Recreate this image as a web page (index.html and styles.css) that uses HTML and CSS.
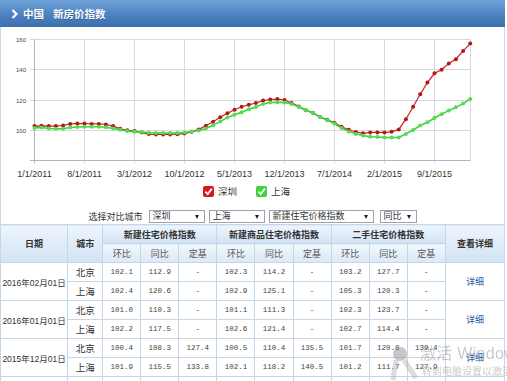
FILE: index.html
```html
<!DOCTYPE html>
<html lang="zh-CN">
<head>
    <meta charset="UTF-8">
    <meta name="viewport" content="width=device-width, initial-scale=1.0">
    <title>中国 新房价指数</title>
    <link rel="stylesheet" href="styles.css">
</head>
<body>
    <div class="panel">
        <div class="panel-title">
            <svg class="chevron" width="7" height="10" viewBox="0 0 7 10">
                <polyline points="1.5,1 5.5,5 1.5,9" fill="none" stroke="#fff" stroke-width="2.2"/>
            </svg>
            <span>中国</span>
            <span class="title-main">新房价指数</span>
        </div>

        <div class="chart-box">
            <svg id="chart" class="chart" width="503" height="158"></svg>

            <div class="legend">
                <span class="legend-item">
                    <svg class="check" width="11" height="11" viewBox="0 0 11 11">
                        <rect width="11" height="11" rx="2" fill="#d9161e"/>
                        <path d="M2.4 5.6 L4.7 8.1 L8.9 2.6" fill="none" stroke="#fff" stroke-width="1.8"/>
                    </svg>
                    深圳
                </span>
                <span class="legend-item">
                    <svg class="check" width="11" height="11" viewBox="0 0 11 11">
                        <rect width="11" height="11" rx="2" fill="#3fd33f"/>
                        <path d="M2.4 5.6 L4.7 8.1 L8.9 2.6" fill="none" stroke="#fff" stroke-width="1.8"/>
                    </svg>
                    上海
                </span>
            </div>

            <div class="filters">
                <span class="filter-label">选择对比城市</span>
                <span class="select city-select">深圳</span>
                <span class="select city-select">上海</span>
                <span class="select type-select">新建住宅价格指数</span>
                <span class="select mode-select">同比</span>
            </div>
        </div>

        <table class="index-table">
            <colgroup>
                <col class="col-date">
                <col class="col-city">
                <col class="col-val"><col class="col-val"><col class="col-val">
                <col class="col-val"><col class="col-val"><col class="col-val">
                <col class="col-val"><col class="col-val"><col class="col-val">
                <col class="col-link">
            </colgroup>
            <thead>
                <tr>
                    <th rowspan="2">日期</th>
                    <th rowspan="2">城市</th>
                    <th colspan="3">新建住宅价格指数</th>
                    <th colspan="3">新建商品住宅价格指数</th>
                    <th colspan="3">二手住宅价格指数</th>
                    <th rowspan="2">查看详细</th>
                </tr>
                <tr class="sub-head">
                    <th>环比</th><th>同比</th><th>定基</th>
                    <th>环比</th><th>同比</th><th>定基</th>
                    <th>环比</th><th>同比</th><th>定基</th>
                </tr>
            </thead>
            <tbody>
                <tr>
                    <td rowspan="2" class="date">2016年02月01日</td>
                    <td class="city">北京</td>
                    <td class="num">102.1</td><td class="num">112.9</td><td class="num">-</td>
                    <td class="num">102.3</td><td class="num">114.2</td><td class="num">-</td>
                    <td class="num">103.2</td><td class="num">127.7</td><td class="num">-</td>
                    <td rowspan="2"><a href="#" class="detail">详细</a></td>
                </tr>
                <tr>
                    <td class="city">上海</td>
                    <td class="num">102.4</td><td class="num">120.6</td><td class="num">-</td>
                    <td class="num">102.9</td><td class="num">125.1</td><td class="num">-</td>
                    <td class="num">105.3</td><td class="num">120.3</td><td class="num">-</td>
                </tr>
                <tr>
                    <td rowspan="2" class="date">2016年01月01日</td>
                    <td class="city">北京</td>
                    <td class="num">101.0</td><td class="num">110.3</td><td class="num">-</td>
                    <td class="num">101.1</td><td class="num">111.3</td><td class="num">-</td>
                    <td class="num">102.3</td><td class="num">123.7</td><td class="num">-</td>
                    <td rowspan="2"><a href="#" class="detail">详细</a></td>
                </tr>
                <tr>
                    <td class="city">上海</td>
                    <td class="num">102.2</td><td class="num">117.5</td><td class="num">-</td>
                    <td class="num">102.6</td><td class="num">121.4</td><td class="num">-</td>
                    <td class="num">102.7</td><td class="num">114.4</td><td class="num">-</td>
                </tr>
                <tr>
                    <td rowspan="2" class="date">2015年12月01日</td>
                    <td class="city">北京</td>
                    <td class="num">100.4</td><td class="num">108.3</td><td class="num">127.4</td>
                    <td class="num">100.5</td><td class="num">110.4</td><td class="num">135.5</td>
                    <td class="num">101.7</td><td class="num">120.8</td><td class="num">139.4</td>
                    <td rowspan="2"><a href="#" class="detail">详细</a></td>
                </tr>
                <tr>
                    <td class="city">上海</td>
                    <td class="num">101.9</td><td class="num">115.5</td><td class="num">133.8</td>
                    <td class="num">102.1</td><td class="num">118.2</td><td class="num">140.5</td>
                    <td class="num">101.2</td><td class="num">111.7</td><td class="num">127.9</td>
                </tr>
                <tr class="next-row">
                    <td></td><td></td>
                    <td></td><td></td><td></td>
                    <td></td><td></td><td></td>
                    <td></td><td></td><td></td>
                    <td></td>
                </tr>
            </tbody>
        </table>
    </div>

    <div class="watermark">
        <svg class="wm-icon" width="36" height="36" viewBox="0 0 36 36">
            <circle cx="16" cy="10" r="7" fill="#8f8f8f" opacity="0.5"/>
            <path d="M12 16 L9 36 M20 16 L32 34" stroke="#a8a8a8" stroke-width="5" opacity="0.4"/>
        </svg>
        <div class="wm-text">
            <div class="wm-big">激活 Windows</div>
            <div class="wm-small">转到电脑设置以激活</div>
        </div>
    </div>

    <script>
        // monthly index, 2011-01 .. 2016-02
        const shenzhen = [
            102.8, 103.0, 102.8, 102.8, 103.2, 104.2, 104.4, 104.5, 104.2, 104.2, 103.8, 102.8,
            101.0, 100.0, 99.5, 98.5, 97.5, 97.3, 97.3, 97.3, 97.4, 97.8, 99.0, 100.6,
            103.0, 105.6, 108.6, 111.2, 113.6, 115.6, 116.8, 118.0, 119.6, 120.3, 120.6, 120.0,
            118.0, 115.8, 113.3, 111.4, 108.8, 107.0, 105.0, 102.4, 100.4, 98.9, 98.0, 98.6,
            98.6, 98.6, 99.0, 100.6, 107.3, 115.6, 123.8, 131.5, 137.6, 140.0, 144.0, 146.9,
            152.4, 157.2
        ];
        const shanghai = [
            101.5, 101.8, 101.2, 101.0, 101.0, 101.8, 102.2, 102.3, 102.3, 102.3, 102.0, 101.2,
            100.3, 99.5, 99.0, 98.8, 98.4, 98.3, 98.3, 98.3, 98.3, 98.5, 99.2, 99.8,
            101.2, 103.3, 105.9, 108.4, 110.3, 111.9, 113.9, 115.4, 117.4, 118.4, 118.5, 118.3,
            117.4, 115.4, 113.2, 111.4, 108.8, 106.6, 104.4, 101.5, 99.3, 97.6, 96.5, 95.8,
            95.6, 95.3, 95.2, 95.3, 97.6, 100.2, 103.1, 105.3, 108.1, 110.6, 113.0, 115.2,
            117.6, 120.7
        ];
        const xLabels = ['1/1/2011', '8/1/2011', '3/1/2012', '10/1/2012', '5/1/2013',
                         '12/1/2013', '7/1/2014', '2/1/2015', '9/1/2015'];

        const NS = 'http://www.w3.org/2000/svg';
        const chart = document.getElementById('chart');
        const plotLeft = 33.5;
        const plotRight = 469.5;
        const plotTop = 12.5;
        const plotBottom = 133.5;
        const step = 50 / 7;
        const xOf = i => plotLeft + i * step;
        const yOf = v => 103.3 - (v - 100) * 1.515;

        function add(tag, attrs, text) {
            const el = document.createElementNS(NS, tag);
            for (const key in attrs) el.setAttribute(key, attrs[key]);
            if (text !== undefined) el.textContent = text;
            chart.appendChild(el);
            return el;
        }

        [160, 140, 120, 100].forEach(v => {
            const y = Math.floor(yOf(v)) + 0.5;
            add('line', { x1: 29, x2: plotRight, y1: y, y2: y, class: 'grid' });
            add('text', { x: 25, y: y + 2, class: 'y-label' }, v);
        });

        xLabels.forEach((label, k) => {
            const x = Math.floor(xOf(k * 7)) + 0.5;
            add('line', { x1: x, x2: x, y1: plotTop, y2: plotBottom + 3, class: k === 0 ? 'axis' : 'grid' });
            add('text', { x: x, y: 150, class: 'x-label' }, label);
        });

        add('line', { x1: plotRight, x2: plotRight, y1: plotTop, y2: plotBottom, class: 'grid' });
        add('line', { x1: 29, x2: plotRight, y1: plotBottom, y2: plotBottom, class: 'axis' });

        function drawSeries(values, cls) {
            const points = values.map((v, i) => xOf(i).toFixed(1) + ',' + yOf(v).toFixed(1)).join(' ');
            add('polyline', { points: points, class: cls + '-line' });
            values.forEach((v, i) => {
                add('circle', { cx: xOf(i).toFixed(1), cy: yOf(v).toFixed(1), r: 2, class: cls + '-dot' });
            });
        }

        drawSeries(shenzhen, 'sz');
        drawSeries(shanghai, 'sh');
    </script>
</body>
</html>
```

FILE: styles.css
```css
body {
    margin: 0;
    background-color: #fff;
    font-family: "Liberation Sans", "Noto Sans CJK SC", sans-serif;
    color: #333;
    overflow: hidden;
}

.panel {
    width: 505px;
}

.panel-title {
    height: 27px;
    display: flex;
    align-items: center;
    padding-left: 11px;
    background: linear-gradient(#6fa2d7, #4c82c0 55%, #3b6ead);
    color: #fff;
    font-family: "Noto Sans CJK SC", sans-serif;
    font-size: 10.5px;
    font-weight: bold;
    text-shadow: 0 1px 0 rgba(0, 0, 0, 0.25);
}

.chevron {
    margin-right: 5px;
}

.title-main {
    margin-left: 9px;
}

.chart-box {
    border-left: 1px solid #c9d8e8;
    border-right: 1px solid #c9d8e8;
}

.chart {
    display: block;
}

.chart .grid {
    stroke: #d6d9dd;
    stroke-width: 1;
}

.chart .axis {
    stroke: #aeb6bf;
    stroke-width: 1;
}

.chart .y-label {
    font-size: 6px;
    fill: #444;
    text-anchor: end;
}

.chart .x-label {
    font-size: 9px;
    fill: #333;
    text-anchor: middle;
}

.chart .sz-line {
    fill: none;
    stroke: #cf1f1f;
    stroke-width: 1.2;
}

.chart .sz-dot {
    fill: #b01818;
}

.chart .sh-line {
    fill: none;
    stroke: #37cf37;
    stroke-width: 1.5;
}

.chart .sh-dot {
    fill: #52dd52;
}

.legend {
    height: 12px;
    display: flex;
    justify-content: center;
    gap: 19px;
    padding-right: 12px;
    font-size: 9.5px;
}

.legend-item {
    display: flex;
    align-items: center;
    gap: 4px;
}

.filters {
    height: 13px;
    margin-top: 13px;
    padding-bottom: 1px;
    display: flex;
    justify-content: center;
    align-items: center;
    font-size: 9px;
}

.filter-label {
    margin-right: 2px;
    color: #333;
}

.select {
    position: relative;
    box-sizing: border-box;
    height: 13px;
    line-height: 11px;
    padding-left: 3px;
    margin-left: 4px;
    border: 1px solid #9ba4ae;
    background-color: #fff;
}

.select::after {
    content: "";
    position: absolute;
    right: 5px;
    top: 4px;
    border-left: 2.5px solid transparent;
    border-right: 2.5px solid transparent;
    border-top: 4px solid #222;
}

.city-select {
    width: 56px;
}

.type-select {
    width: 105px;
}

.mode-select {
    width: 37px;
    margin-left: 6px;
}

.index-table {
    width: 505px;
    border-collapse: collapse;
    table-layout: fixed;
    font-size: 9px;
}

.col-date {
    width: 67px;
}

.col-city {
    width: 35px;
}

.col-val {
    width: 38px;
}

.col-link {
    width: 59px;
}

.index-table th,
.index-table td {
    height: 18px;
    padding: 0;
    border: 1px solid #c5d6e9;
    text-align: center;
    white-space: nowrap;
}

.index-table th {
    background: linear-gradient(#eef5fd, #d2e2f4);
    color: #333;
    font-weight: bold;
}

.sub-head th {
    font-weight: normal;
    color: #555;
    background: linear-gradient(#f1f7fd, #dbe8f6);
}

.index-table .date {
    font-size: 8.5px;
    color: #333;
}

.index-table .city {
    font-size: 9.5px;
    color: #333;
}

.index-table .num {
    font-family: "Liberation Mono", monospace;
    font-size: 7.5px;
    color: #444;
}

.detail {
    color: #2a5ca8;
    text-decoration: none;
}

.watermark {
    position: fixed;
    left: 384px;
    top: 344px;
    display: flex;
    align-items: flex-start;
    white-space: nowrap;
    pointer-events: none;
}

.wm-text {
    color: rgba(150, 150, 150, 0.5);
}

.wm-big {
    font-size: 16px;
    line-height: 20px;
    letter-spacing: 0.3px;
}

.wm-small {
    font-family: "Noto Sans CJK SC", sans-serif;
    font-size: 10px;
    line-height: 13px;
    margin-left: 2px;
}
```
